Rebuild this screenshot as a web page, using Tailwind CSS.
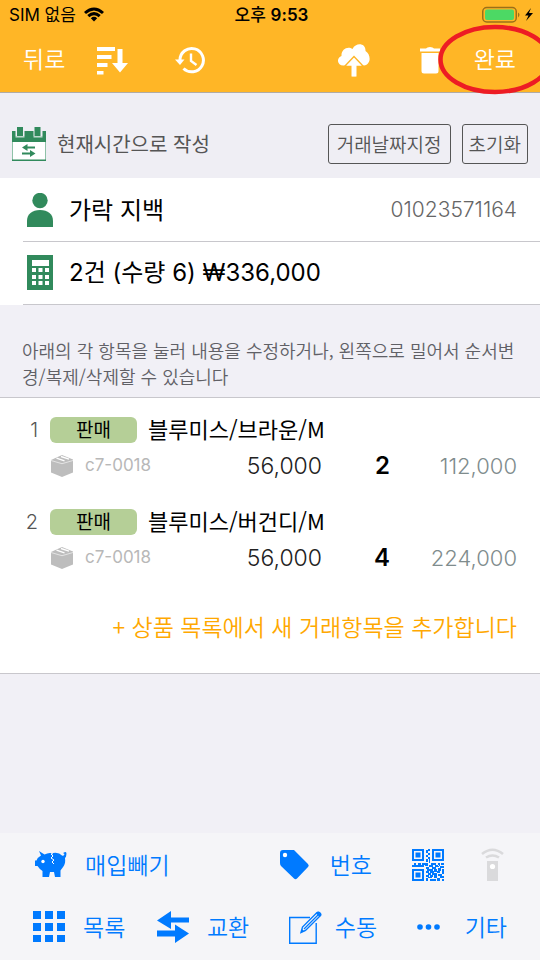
<!DOCTYPE html>
<html lang="ko">
<head>
<meta charset="utf-8">
<meta name="viewport" content="width=device-width, initial-scale=1">
<title>거래 작성</title>
<script src="https://cdn.jsdelivr.net/npm/@tailwindcss/browser@4"></script>
</head>
<body class="min-h-screen flex flex-col overflow-x-hidden bg-[#f1f0f6] text-black font-['Noto_Sans_CJK_KR',sans-serif]">
<header class="relative bg-[#ffb626] border-b border-[#b0aba4]">
  <div class="grid grid-cols-3 items-center h-7 pl-[9px] pr-[6px] text-[17px] leading-6">
    <div class="flex items-center gap-2 whitespace-nowrap"><span><span class="font-['Inter']">SIM</span> 없음</span>
      <svg class="w-5 h-[15px]" viewBox="0 0 20 15" fill="none" stroke="#000" stroke-width="3" aria-label="Wi-Fi"><path d="M1 6Q10-2 19 6M4.300 9.200Q10 4 15.700 9.200"/><path d="M10 14.500 6.800 11.200Q10 8.500 13.200 11.200Z" fill="#000" stroke="none"/></svg>
    </div>
    <div class="text-center font-medium whitespace-nowrap">오후 <span class="font-['Inter'] font-semibold">9:53</span></div>
    <svg class="justify-self-end w-[52px] h-[17px]" viewBox="0 0 52 17" aria-label="배터리 충전 중"><rect x=".75" y="1.500" width="33.500" height="14.500" rx="4" fill="none" stroke="#9b7018" stroke-width="1.500"/><rect x="3" y="3.500" width="29" height="10.500" rx="2" fill="#4cd964"/><path d="M36 6.500q3 2 0 5z" fill="#9b7018"/><path d="M49 2 43 9.500h3.500L44 15l7-8h-4z"/></svg>
  </div>
  <nav class="flex items-center justify-between h-16 pl-[23px] pr-6 text-white text-[23px] leading-8">
    <div class="flex items-center">
      <button type="button" class="pb-1 font-[350]">뒤로</button>
      <button type="button" aria-label="정렬" class="ml-8"><svg class="w-[31px] h-[29px]" viewBox="0 0 31 29" fill="#fff"><path d="M0 1h18v4H0zM0 9h14.500v4H0zM0 17h10.500v4H0zM0 25h6.500v3.500H0zM20.500 3h5v14H31l-8 9.500L15 17h5.500z"/></svg></button>
      <button type="button" aria-label="기록" class="ml-[47px]"><svg class="w-[30px] h-[28px]" viewBox="0 0 30 28" fill="none" stroke="#fff" stroke-width="3"><path d="M5 14A11.700 11.700 0 1 1 8.500 22.500"/><path d="M16 7.500V15l5.500 4" stroke-width="2.400"/><path d="M0 13.500h9.500L5 19z" fill="#fff" stroke="none"/></svg></button>
    </div>
    <div class="flex items-center">
      <button type="button" aria-label="업로드"><svg class="w-8 h-[33px]" viewBox="0 0 32 33"><path d="M6 21.500C-1 22-2 14 3.500 12 3 5 10 1.500 14.500 5 18-2 28-1 27.500 7c5.500 3.500 6 13-1.500 14.500z" fill="#fff"/><path d="M16 12.500 6.500 22.500h7V33h5V22.500h7z" fill="#fff" stroke="#ffb626" stroke-width="1.400"/><path d="M13.500 20h5v12.500h-5z" fill="#fff"/></svg></button>
      <button type="button" aria-label="삭제" class="ml-[50px]"><svg class="w-5 h-[27px]" viewBox="0 0 20 27" fill="#fff"><path d="M0 1.500h6Q7 0 10 0t4 1.500h6v3H0zM1.500 6h17v18q0 2.500-2.500 2.500H4Q1.500 26.500 1.500 24z"/></svg></button>
      <button type="button" class="ml-[34px] pb-1 font-[350]">완료</button>
    </div>
  </nav>
  <svg class="absolute z-10 top-6 -right-3 w-[114px] h-[71px]" viewBox="0 0 114 71" fill="none" aria-hidden="true"><ellipse cx="57" cy="35.500" rx="54.500" ry="32.500" stroke="#ed1c24" stroke-width="4.500"/></svg>
</header>

<main class="flex-1">
  <section class="flex items-center h-[85px] pt-4 pl-3 pr-3 bg-[#efeef4]">
    <svg class="w-[34px] h-[34px]" viewBox="0 0 34 34" aria-hidden="true"><path d="M.5 10h33v23.500H.5z" fill="#fff" stroke="#8fc2a8"/><path d="M0 32.500h34V34H0zM0 4h3.500v6.500h9V4h9v6.500h9V4H34v11H0zM5 0h6v9H5zM22.500 0h6v9h-6z" fill="#318a5c"/><path d="M10 20.500 15.500 17v2.500H23v2h-7.500V24zM23.500 26.500 18 23v2.500h-8v2h8V30z" fill="#318a5c"/></svg>
    <h1 class="ml-[11px] text-[20px] leading-7 font-normal text-[#555]">현재시간으로 작성</h1>
    <div class="ml-auto flex gap-[11px] text-[19px] leading-[38px] font-[350] text-[#555]">
      <button type="button" class="px-2 rounded-[3px] border border-[#555]">거래날짜지정</button>
      <button type="button" class="px-1.5 rounded-[3px] border border-[#555]">초기화</button>
    </div>
  </section>

  <section class="bg-white pl-[23px]">
    <div class="flex items-center h-16 pl-[3px] pr-[23px] border-b border-[#c8c7cc]">
      <svg class="w-[28px] h-[34px]" viewBox="0 0 28 34" fill="#318a5c" aria-hidden="true"><circle cx="14" cy="7.500" r="7.700"/><path d="M1 34v-6c0-7 5-11 13-11s13 4 13 11v6z"/></svg>
      <span class="ml-[15px] pb-0.5 text-[24px] leading-8">가락 지백</span>
      <span class="ml-auto font-['Inter'] font-light text-[21px] leading-7 text-[#666]">01023571164</span>
    </div>
    <div class="flex items-center h-[63px] pl-[3px] border-b border-[#c8c7cc]">
      <svg class="w-[28px] h-[36px]" viewBox="0 0 28 36" aria-hidden="true"><path d="M1 0h26v35H1z" fill="#318a5c"/><path d="M6 5h17v6H6zM6 13h4v4H6zM12.500 13h4v4h-4zM19 13h4v4h-4zM6 20h4v4H6zM12.500 20h4v4h-4zM19 20h4v4h-4zM6 26h4v4H6zM12.500 26h4v4h-4zM19 26h4v4h-4z" fill="#fff"/></svg>
      <span class="ml-[15px] text-[24px] leading-8 font-['Inter','Noto_Sans_CJK_KR',sans-serif]">2건 (수량 6) ₩336,000</span>
    </div>
  </section>

  <p class="pl-[22px] pr-[22px] pt-8 pb-2 text-[18px] leading-[26px] font-[350] text-[#606066] break-all">아래의 각 항목을 눌러 내용을 수정하거나, 왼쪽으로 밀어서 순서변경/복제/삭제할 수 있습니다</p>

  <section class="bg-white border-y border-[#c8c7cc]">
    <ul class="pr-[23px]">
      <li class="h-[92px] pt-4">
        <div class="flex items-center h-8">
          <span class="w-[38px] text-right font-['Inter'] font-light text-[20px] text-[#555]">1</span>
          <span class="ml-3 w-[87px] h-[26px] rounded-md bg-[#b5cf97] text-center text-[19px] leading-6">판매</span>
          <span class="ml-[11px] pb-1 text-[22px] leading-8">블루미스/브라운/M</span>
        </div>
        <div class="flex items-center h-10 pl-[50px] font-['Inter']">
          <svg class="w-6 h-[22px]" viewBox="0 0 24 22" aria-hidden="true"><path d="M1 5 12 0l11 4.500v13L12 22 1 17.500z" fill="#bdbdbd"/><path d="M1 5.500 12 8.700l11-3.200" fill="none" stroke="#e8e8e8" stroke-width=".9"/><path d="m6.500 3.200 8 2.600M11 1.500l8 2.600" fill="none" stroke="#fff" stroke-width="1.400"/></svg>
          <span class="ml-[11px] w-20 text-[17px] text-[#b8b8b8]">c7-0018</span>
          <span class="ml-auto w-[100px] text-right text-[23px] font-light text-[#222]">56,000</span>
          <span class="w-[68px] text-right text-[24px] font-semibold">2</span>
          <span class="w-[127px] text-right text-[22px] font-light text-[#7f8c8d]">112,000</span>
        </div>
      </li>
      <li class="h-[92px] pt-4">
        <div class="flex items-center h-8">
          <span class="w-[38px] text-right font-['Inter'] font-light text-[20px] text-[#555]">2</span>
          <span class="ml-3 w-[87px] h-[26px] rounded-md bg-[#b5cf97] text-center text-[19px] leading-6">판매</span>
          <span class="ml-[11px] pb-1 text-[22px] leading-8">블루미스/버건디/M</span>
        </div>
        <div class="flex items-center h-10 pl-[50px] font-['Inter']">
          <svg class="w-6 h-[22px]" viewBox="0 0 24 22" aria-hidden="true"><path d="M1 5 12 0l11 4.500v13L12 22 1 17.500z" fill="#bdbdbd"/><path d="M1 5.500 12 8.700l11-3.200" fill="none" stroke="#e8e8e8" stroke-width=".9"/><path d="m6.500 3.200 8 2.600M11 1.500l8 2.600" fill="none" stroke="#fff" stroke-width="1.400"/></svg>
          <span class="ml-[11px] w-20 text-[17px] text-[#b8b8b8]">c7-0018</span>
          <span class="ml-auto w-[100px] text-right text-[23px] font-light text-[#222]">56,000</span>
          <span class="w-[68px] text-right text-[24px] font-semibold">4</span>
          <span class="w-[127px] text-right text-[22px] font-light text-[#7f8c8d]">224,000</span>
        </div>
      </li>
    </ul>
    <button type="button" class="flex items-center justify-end w-full h-[91px] pr-[23px] pb-1 text-[23px] leading-8 font-[350] text-[#ffa800]">+ 상품 목록에서 새 거래항목을 추가합니다</button>
  </section>
</main>

<footer class="bg-[#f5f5f8] h-[127px] px-[33px] text-[23px] leading-8 font-[350] text-[#007aff]">
  <div class="flex items-center h-[63px]">
    <button type="button" class="flex items-center gap-[18px]">
      <svg class="ml-0.5 w-8 h-[27px]" viewBox="0 0 32 27" aria-hidden="true"><path d="M4 0 9.500 3.500Q13 1.500 16 2l1 2 1-2q6-1 9 2.500 2 1 2.500-1.500Q27 2 29.500 1.200t1.800 2.800q0 2-1.300 3c1 7-2 9-4.500 12.500V26H20l-1-5h-4l-1 5H7.500v-6Q4 17.500 2.500 15H0v-5.500h1.500Q3 6 6 4.500z" fill="#007aff"/><circle cx="8" cy="10.500" r="1.700" fill="#fff"/><path d="m16 3 2 2-2 2 3 2-2 2 2 2" fill="none" stroke="#fff" stroke-width="1"/></svg>
      <span class="pb-0.5">매입빼기</span></button>
    <button type="button" class="flex items-center gap-5 ml-auto">
      <svg class="w-[30px] h-[30px]" viewBox="0 0 30 30" aria-hidden="true"><path d="M3 0h11l14 14q1.500 2 0 3L17 28.500q-1.500 1.500-3 0L1 16Q0 15 0 13V3Q0 0 3 0z" fill="#007aff"/><circle cx="5" cy="5" r="2.200" fill="#fff"/></svg>
      <span class="pb-0.5">번호</span></button>
    <button type="button" aria-label="QR 코드" class="ml-10">
      <svg class="w-8 h-8" viewBox="0 0 32 32" fill="#007aff" fill-rule="evenodd"><path d="M0 0h12v12H0zM2 2v8h8V2zM3.500 3.500h5v5h-5zM20 0h12v12H20zM22 2v8h8V2zM23.500 3.500h5v5h-5zM0 20h12v12H0zM2 22v8h8v-8zM3.500 23.500h5v5h-5z"/><path d="M14 1h2v3h-2zM16 0h2v2h-2zM16 4h2v2h-2zM14 6h2v2h-2zM16 8h2v2h-2zM14 10h2v3h-2zM17 10h1v4h-1zM0 16h12v2H0zM2 14h2v2H2zM6 14h3v2H6zM10 14h6v2h-6zM13 16h3v1h-3zM19 14h5v2h-5zM26 14h2v3h-2zM29 14h3v2h-3zM17 16h4v2h-4zM23 16h4v2h-4zM28 17h4v2h-4zM14 18h3v2h-3zM20 18h4v2h-4zM26 19h3v3h-3zM15 20h6v2h-6zM22 20h3v3h-3zM30 20h2v5h-2zM14 22h3v2h-3zM18 22h4v2h-4zM25 22h3v2h-3zM16 24h3v2h-3zM20 24h5v2h-5zM26 25h4v2h-4zM14 26h3v2h-3zM18 26h3v2h-3zM22 26h3v3h-3zM28 27h4v2h-4zM16 28h4v1h-4zM14 29h2v3h-2zM18 30h6v2h-6zM25 29h3v3h-3zM30 30h2v2h-2z"/></svg></button>
    <button type="button" aria-label="리모컨" disabled class="ml-[37px] mr-[3px]">
      <svg class="w-[23px] h-[33px]" viewBox="0 0 23 33" fill="none" stroke="#dadadc" stroke-width="2.600"><path d="M1 6Q11.500-2.500 22 6M5 9.500q6.500-4 13 0"/><path d="M6 13h11v20H6z" fill="#dadadc" stroke="none"/><circle cx="11.500" cy="18.500" r="2.600" fill="#fff" stroke="none"/></svg></button>
  </div>
  <div class="flex items-center justify-between h-16 pb-0.5">
    <button type="button" class="flex items-center gap-[18px]">
      <svg class="w-8 h-8" viewBox="0 0 32 32" fill="#007aff" aria-hidden="true"><path d="M0 0h8v8H0zM12 0h8v8h-8zM24 0h8v8h-8zM0 12h8v8H0zM12 12h8v8h-8zM24 12h8v8h-8zM0 24h8v7H0zM12 24h8v7h-8zM24 24h8v7h-8z"/></svg>
      <span class="pb-0.5">목록</span></button>
    <button type="button" class="flex items-center gap-[18px] -ml-2">
      <svg class="w-8 h-8" viewBox="0 0 32 32" fill="#007aff" aria-hidden="true"><path d="M0 9.500 14 0v6.500h18v5H14V18zM32 22.500 18 32v-6.500H0v-6h18v-6z"/></svg>
      <span class="pb-0.5">교환</span></button>
    <button type="button" class="flex items-center gap-[13px]">
      <svg class="w-[33px] h-[33px]" viewBox="0 0 33 33" fill="none" stroke="#007aff" aria-hidden="true"><path d="M21 6.500H.7v25.800h26.500V12" stroke-width="1.400"/><path d="M12 21.500 13.500 16 28 1.500Q29.500.5 31 2q1.500 1.500 0 3L16.500 19.500z" stroke-width="1.400"/><path d="m15 18 14-14" stroke-width="1.200"/><path d="m27 2.500 2-2 3.500 3.500-2 2zM12 21.500l1-3.500 2.500 2.500z" fill="#007aff" stroke="none"/></svg>
      <span class="pb-0.5">수동</span></button>
    <button type="button" class="flex items-center gap-[25px]">
      <svg class="w-[23px] h-[6px]" viewBox="0 0 23 6" fill="#007aff" aria-hidden="true"><circle cx="3" cy="3" r="2.800"/><circle cx="11.500" cy="3" r="2.800"/><circle cx="20" cy="3" r="2.800"/></svg>
      <span class="pb-0.5">기타</span></button>
  </div>
</footer>
</body>
</html>
